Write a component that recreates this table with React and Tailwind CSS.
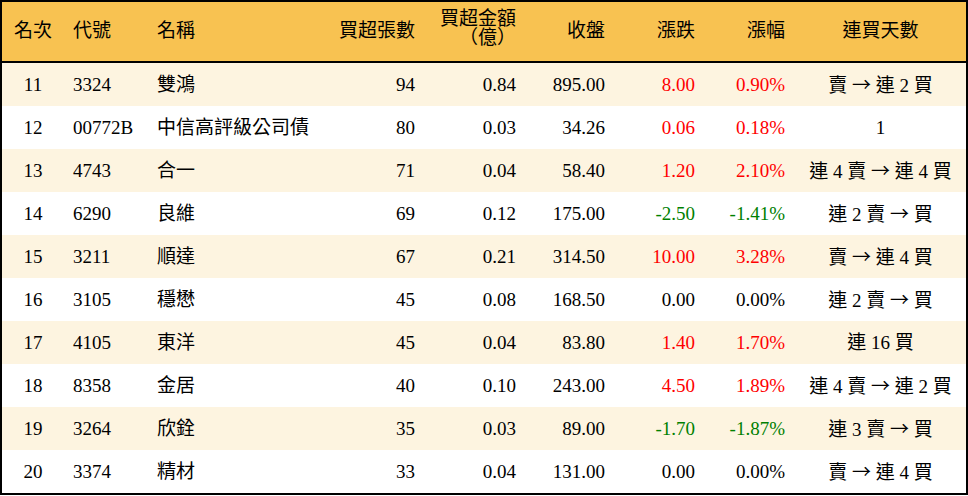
import React from 'react';

// 買超排行資料
const rows = [
  { rank: 11, code: '3324', name: '雙鴻', lots: 94, amount: '0.84', close: '895.00', chg: '8.00', pct: '0.90%', streak: '賣 → 連 2 買' },
  { rank: 12, code: '00772B', name: '中信高評級公司債', lots: 80, amount: '0.03', close: '34.26', chg: '0.06', pct: '0.18%', streak: '1' },
  { rank: 13, code: '4743', name: '合一', lots: 71, amount: '0.04', close: '58.40', chg: '1.20', pct: '2.10%', streak: '連 4 賣 → 連 4 買' },
  { rank: 14, code: '6290', name: '良維', lots: 69, amount: '0.12', close: '175.00', chg: '-2.50', pct: '-1.41%', streak: '連 2 賣 → 買' },
  { rank: 15, code: '3211', name: '順達', lots: 67, amount: '0.21', close: '314.50', chg: '10.00', pct: '3.28%', streak: '賣 → 連 4 買' },
  { rank: 16, code: '3105', name: '穩懋', lots: 45, amount: '0.08', close: '168.50', chg: '0.00', pct: '0.00%', streak: '連 2 賣 → 買' },
  { rank: 17, code: '4105', name: '東洋', lots: 45, amount: '0.04', close: '83.80', chg: '1.40', pct: '1.70%', streak: '連 16 買' },
  { rank: 18, code: '8358', name: '金居', lots: 40, amount: '0.10', close: '243.00', chg: '4.50', pct: '1.89%', streak: '連 4 賣 → 連 2 買' },
  { rank: 19, code: '3264', name: '欣銓', lots: 35, amount: '0.03', close: '89.00', chg: '-1.70', pct: '-1.87%', streak: '連 3 賣 → 買' },
  { rank: 20, code: '3374', name: '精材', lots: 33, amount: '0.04', close: '131.00', chg: '0.00', pct: '0.00%', streak: '賣 → 連 4 買' },
];

const tone = (v) => {
  const n = parseFloat(v);
  if (n > 0) return 'text-[#ff0000]';
  if (n < 0) return 'text-[#008000]';
  return 'text-black';
};

const font = { fontFamily: '"Liberation Serif", "Noto Sans CJK TC", serif' };

// 箭頭用全形字型
const Streak = ({ text }) => {
  const parts = text.split('→');
  return (
    <>
      {parts.map((p, i) => (
        <React.Fragment key={i}>
          {i > 0 && <span style={{ fontFamily: '"Noto Sans CJK TC", sans-serif' }}>→</span>}
          {p}
        </React.Fragment>
      ))}
    </>
  );
};

export default function App() {
  return (
    <div className="w-[968px] h-[496px] bg-white" style={font}>
      <div className="border-2 border-black text-[19px] text-black">
        {/* 表頭 */}
        <div className="flex h-[61px] items-center bg-[#f8c251] border-b-2 border-black">
          <div className="w-[62px] text-center">名次</div>
          <div className="w-[86px] pl-[9px]">代號</div>
          <div className="w-[180px] pl-[7px]">名稱</div>
          <div className="w-[85px] text-right">買超張數</div>
          <div className="w-[101px] text-right leading-[19px] -mt-[7px]">
            <div>買超金額</div>
            <div>（億）</div>
          </div>
          <div className="w-[89px] text-right">收盤</div>
          <div className="w-[90px] text-right">漲跌</div>
          <div className="w-[90px] text-right">漲幅</div>
          <div className="flex-1 pl-[10px] text-center">連買天數</div>
        </div>

        {rows.map((r, i) => (
          <div
            key={r.rank}
            className={`flex h-[43px] pt-[2px] items-center ${i % 2 === 0 ? 'bg-[#fdf4e0]' : 'bg-white'}`}
          >
            <div className="w-[62px] text-center">{r.rank}</div>
            <div className="w-[86px] pl-[9px]">{r.code}</div>
            <div className="w-[180px] pl-[7px] whitespace-nowrap">{r.name}</div>
            <div className="w-[85px] text-right">{r.lots}</div>
            <div className="w-[101px] text-right">{r.amount}</div>
            <div className="w-[89px] text-right">{r.close}</div>
            <div className={`w-[90px] text-right ${tone(r.chg)}`}>{r.chg}</div>
            <div className={`w-[90px] text-right ${tone(r.pct)}`}>{r.pct}</div>
            <div className="flex-1 pl-[10px] text-center whitespace-nowrap">
              <Streak text={r.streak} />
            </div>
          </div>
        ))}
      </div>
    </div>
  );
}
